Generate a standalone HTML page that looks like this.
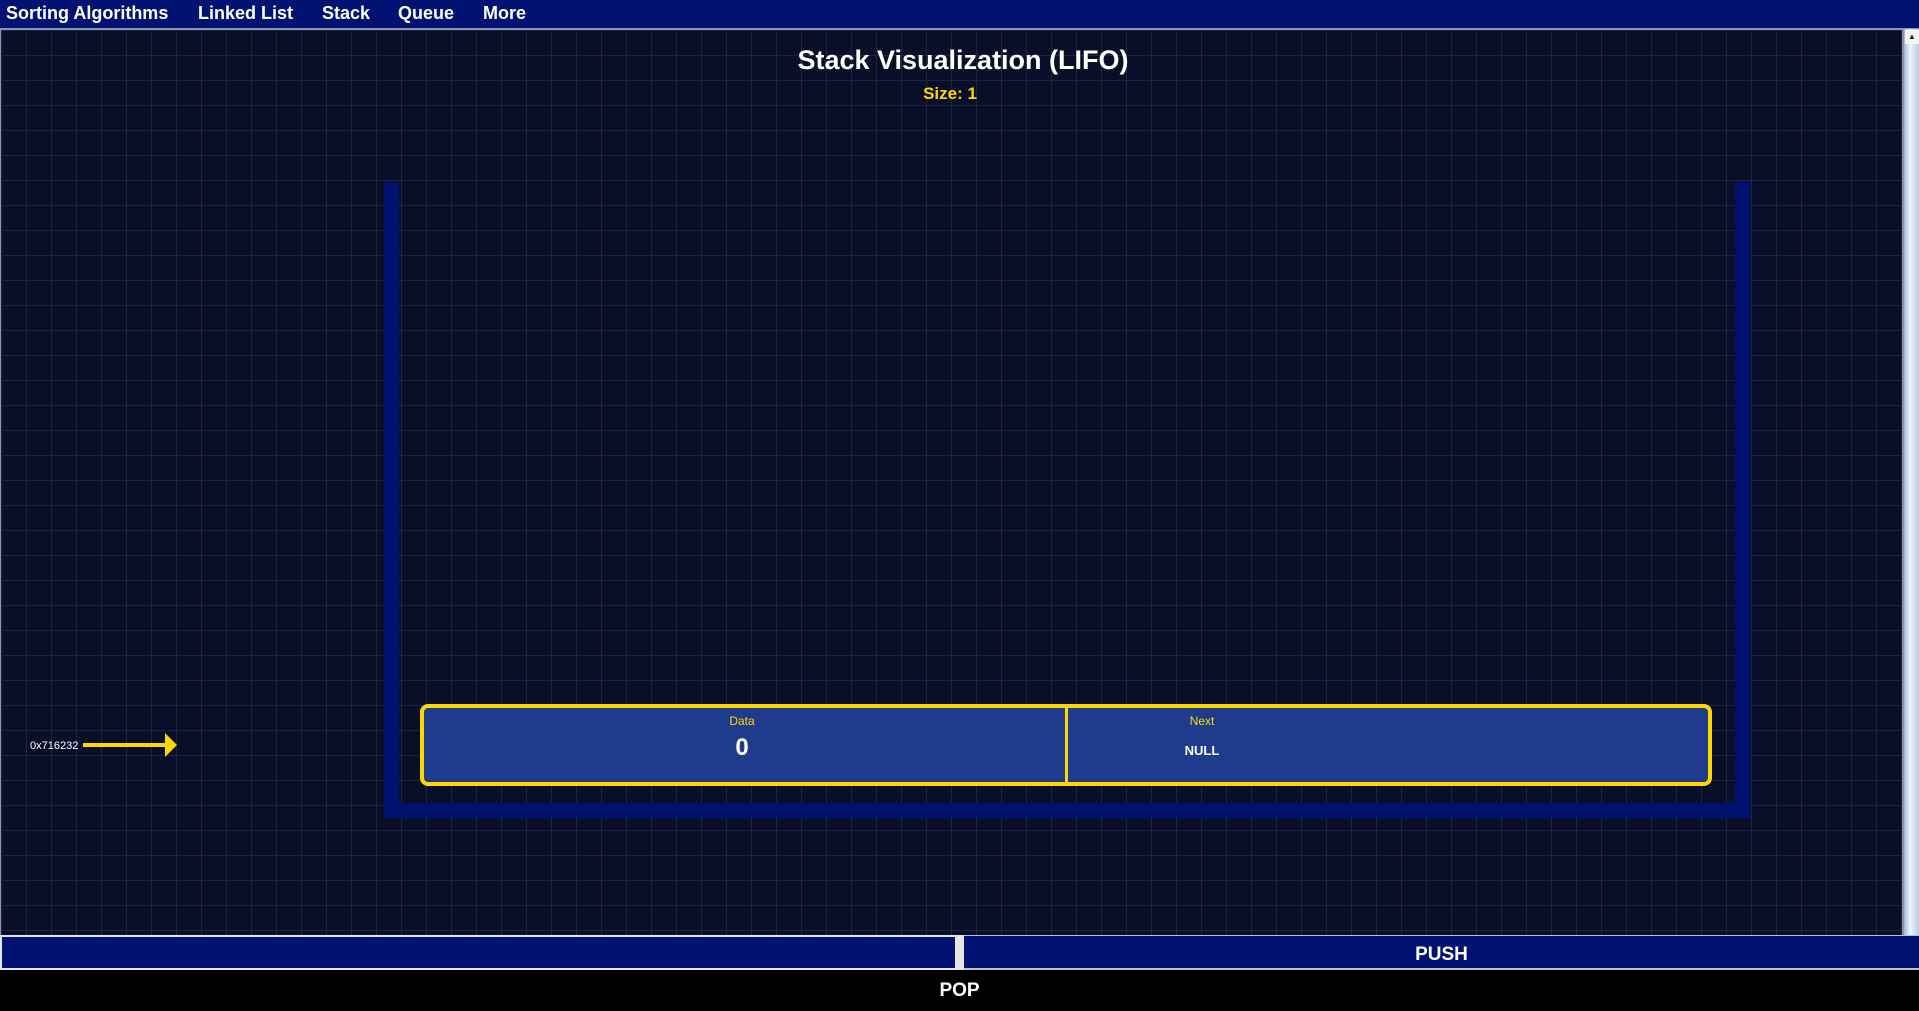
<!DOCTYPE html>
<html><head><meta charset="utf-8"><style>
*{margin:0;padding:0;box-sizing:border-box}
body{width:1919px;height:1005px;overflow:hidden;background:#000;font-family:"Liberation Sans",Arial,sans-serif;position:relative}
.nav{position:absolute;left:0;top:0;width:1919px;height:29px;background:#001372;border-bottom:1px solid #8a93b0}
.nav span{position:absolute;top:3px;color:#fff;font-weight:bold;font-size:18px}
.main{position:absolute;left:0;top:29px;width:1903px;height:907px;border:1px solid #8a93b0;background-color:#0a0f29;
background-image:linear-gradient(#1c2540 1px,transparent 1px),linear-gradient(90deg,#1c2540 1px,transparent 1px);background-size:25px 25px;background-position:0 0}
.sb{position:absolute;left:1903px;top:29px;width:16px;height:907px;background:linear-gradient(90deg,#9fb6d6,#eef4fb 40%,#bccde4);border-left:1px solid #8a93b0}
.sb .up{position:absolute;left:1px;top:1px;width:14px;height:14px;background:#f4f4f4;font-size:8px;text-align:center;line-height:14px;color:#222}
.abs{position:absolute}
.t{color:#fff;text-align:center}
</style></head><body>
<div class="nav">
<span style="left:6px">Sorting Algorithms</span>
<span style="left:198px">Linked List</span>
<span style="left:322px">Stack</span>
<span style="left:398px">Queue</span>
<span style="left:483px">More</span>
</div>
<div class="main"></div>
<div class="sb"><div class="up">▲</div></div>
<div class="abs t" style="left:663px;top:45px;width:600px;font-size:27px;font-weight:bold">Stack Visualization (LIFO)</div>
<div class="abs" style="left:800px;top:84px;width:300px;text-align:center;color:#ffd700;font-size:17px;font-weight:bold">Size: 1</div>
<div class="abs" style="left:384px;top:182px;width:15px;height:636px;background:#001170"></div>
<div class="abs" style="left:1735px;top:182px;width:15px;height:636px;background:#001170"></div>
<div class="abs" style="left:384px;top:803px;width:1366px;height:15px;background:#001170"></div>
<div class="abs" style="left:420px;top:704px;width:1292px;height:82px;background:#1f3c8c;border:4px solid #ffd700;border-radius:8px"></div>
<div class="abs" style="left:1065px;top:708px;width:3px;height:74px;background:#ffd700"></div>
<div class="abs" style="left:642px;top:714px;width:200px;text-align:center;color:#ffd700;font-size:12px">Data</div>
<div class="abs t" style="left:642px;top:734px;width:200px;font-size:24px;font-weight:bold">0</div>
<div class="abs" style="left:1102px;top:714px;width:200px;text-align:center;color:#ffd700;font-size:12px">Next</div>
<div class="abs t" style="left:1102px;top:743px;width:200px;font-size:13px;font-weight:bold">NULL</div>
<div class="abs" style="left:30px;top:740px;color:#fff;font-size:11px">0x716232</div>
<div class="abs" style="left:83px;top:743px;width:84px;height:4px;background:#ffd700"></div>
<div class="abs" style="left:165px;top:733px;width:0;height:0;border-top:12px solid transparent;border-bottom:12px solid transparent;border-left:12px solid #ffd700"></div>
<div class="abs" style="left:0;top:935px;width:957px;height:35px;background:#001372;border:2px solid #e6e6e6"></div>
<div class="abs" style="left:957px;top:935px;width:7px;height:35px;background:#e6e6e6"></div>
<div class="abs t" style="left:964px;top:935px;width:955px;height:35px;background:#001372;border-top:1px solid #c0c0c0;border-bottom:2px solid #c0c0c0;font-size:19px;font-weight:bold;line-height:38px">PUSH</div>
<div class="abs t" style="left:0;top:970px;width:1919px;height:35px;background:#000;font-size:19px;font-weight:bold;line-height:41px">POP</div>
</body></html>
